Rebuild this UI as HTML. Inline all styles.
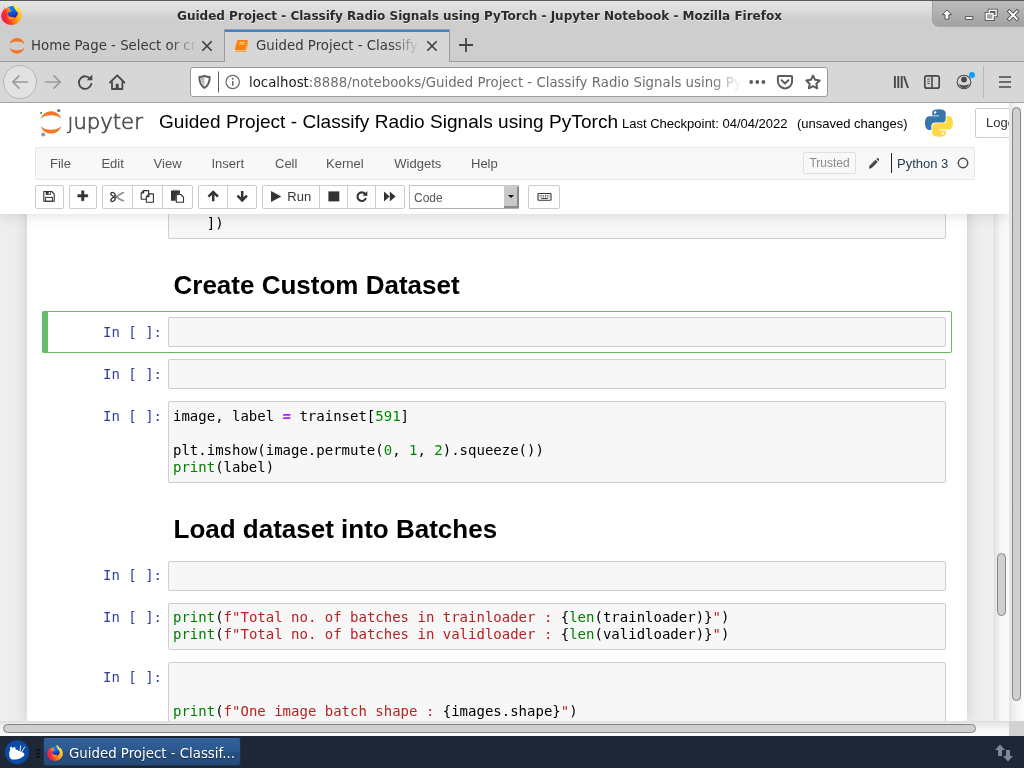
<!DOCTYPE html>
<html lang="en">
<head>
<meta charset="utf-8">
<title>Guided Project - Classify Radio Signals using PyTorch - Jupyter Notebook</title>
<style>
*{box-sizing:border-box;margin:0;padding:0}
html,body{width:1024px;height:768px;overflow:hidden;background:#d7d7d7}
body{position:relative;font-family:"DejaVu Sans","Liberation Sans",sans-serif;font-size:13px;color:#222}
#root{position:absolute;left:0;top:0;width:1024px;height:768px;will-change:transform}
.abs{position:absolute}
/* ---------- window title bar ---------- */
#titlebar{left:0;top:0;width:1024px;height:30px;background:linear-gradient(#e5e5e5 0px,#dfdfdf 7px,#d6d6d6 13px,#cecece 18px,#cecece 30px);border-top:1px solid #5a5a5a}
#titletext{left:0.500px;top:9px;text-shadow:0 1px 0 rgba(255,255,255,.6);width:958px;text-align:center;font-weight:bold;font-size:12px;color:#2b2b2b;white-space:nowrap}
#winbtns{left:932px;top:1px;width:92px;height:26px;background:linear-gradient(#bcbcbc,#a2a2a2);border-bottom-left-radius:7px;border-left:1px solid #a0a0a0;border-bottom:1px solid #a8a8a8}
/* ---------- tab bar ---------- */
#tabbar{left:0;top:30px;width:1024px;height:32px;background:#cecece;border-bottom:1px solid #9c9c9c}
.tabtxt{font-size:13.33px;color:#3a3a3a;white-space:nowrap;overflow:hidden}
#tab2{left:224px;top:29px;width:226px;height:33px;background:#d7d7d7;border-left:1px solid #9c9c9c;border-right:1px solid #9c9c9c;border-top:1px solid #9c9c9c}
#tab2:before{content:"";position:absolute;left:0;top:0;width:100%;height:2px;background:#2f86de}
/* ---------- nav bar ---------- */
#navbar{left:0;top:62px;width:1024px;height:41px;background:#d7d7d7;border-bottom:1px solid #a5a5a5}
#urlbar{left:190px;top:67px;width:638px;height:30px;background:#fff;border:1px solid #9a9a9a;border-radius:3px}
#urltext{left:249px;top:75px;font-size:13.33px;color:#6e6e6e;white-space:nowrap;width:492px;overflow:hidden}
#urltext b{font-weight:normal;color:#1a1a1a}
/* ---------- page ---------- */
#page{left:0;top:103px;width:1009px;height:618px;background:#eee;overflow:hidden;font-family:"Liberation Sans",sans-serif}
#header{left:0;top:0;width:1009px;height:111px;background:#fff;box-shadow:0 0 12px 1px rgba(87,87,87,.2);z-index:5}
#nbtitle{left:159px;top:6px;letter-spacing:0.04px;font-size:19.05px;color:#000;white-space:nowrap;line-height:25px}
#chk{left:622px;top:13px;font-size:13px;color:#000;white-space:nowrap;line-height:16px}
#chk2{left:797px;top:13px;font-size:13px;color:#000;white-space:nowrap;line-height:16px}
#logout{left:975px;top:5px;width:60px;height:30px;border:1px solid #ccc;border-radius:2px;font-size:13px;color:#333;line-height:28px;padding-left:10px;background:#fff}
#menubar{left:35px;top:44px;width:940px;height:33px;background:#f8f8f8;border:1px solid #e7e7e7;border-radius:2px}
.mi{position:absolute;top:8px;font-size:13px;color:#555;line-height:15px}
.tb{position:absolute;top:82px;height:24px;border:1px solid #ccc;border-radius:2px;background:#fff}
.tb i{position:absolute;top:0;width:1px;height:22px;background:#ccc}
#jtext{left:67.500px;top:4px;font-family:"DejaVu Sans",sans-serif;font-weight:200;-webkit-text-stroke:0.700px #4e4e4e;font-size:21.2px;line-height:30px;color:#4e4e4e;letter-spacing:0}
#sel{left:409px;top:82px;width:110px;height:23.500px;border:1px solid #c4c4c4;border-bottom-color:#b0b0b0;background:#fff;font-size:12px;color:#555;line-height:22px}
#sel span{position:absolute;left:4px;top:0.500px}
#sel b{position:absolute;right:-1px;top:-0.500px;width:15px;height:22.500px;background:#c9c9c9;border-right:2px solid #8c8c8c;border-bottom:2px solid #8c8c8c;border-top:1px solid #d4d4d4}
#sel b:after{content:"";position:absolute;left:4.400px;top:8.200px;border:3.400px solid transparent;border-top:3.800px solid #111;border-bottom:0}
#nb{left:27px;top:0;width:940px;height:618px;background:#fff;box-shadow:0 0 12px 1px rgba(87,87,87,.2)}
.inp{position:absolute;left:141px;width:778px;background:#f7f7f7;border:1px solid #cfcfcf;border-radius:2px}
.pr{position:absolute;left:21px;width:120px;text-align:right;padding-right:6px;font-family:"DejaVu Sans Mono","Liberation Mono",monospace;font-size:14px;line-height:17px;color:#303f9f;white-space:pre}
pre{position:absolute;left:146px;font-family:"DejaVu Sans Mono","Liberation Mono",monospace;font-size:14px;line-height:17px;color:#000;white-space:pre}
.k{color:#008000}.n{color:#080}.s{color:#ba2121}.o{color:#a2f;font-weight:bold}
h1{position:absolute;left:146.500px;font-size:26px;line-height:26px;font-weight:bold;color:#000;white-space:nowrap}
/* ---------- scrollbars ---------- */
.thumb{position:absolute;background:#cfcfcf;border:1px solid #858585;border-radius:5px}
/* ---------- taskbar ---------- */
#taskbar{left:0;top:736px;width:1024px;height:32px;background:#1e2736}
</style>
</head>
<body>
<div id="root">

<!-- TITLE BAR -->
<div id="titlebar" class="abs"></div>
<div id="titletext" class="abs">Guided Project - Classify Radio Signals using PyTorch - Jupyter Notebook - Mozilla Firefox</div>
<div id="winbtns" class="abs"></div>
<!-- firefox logo -->
<svg class="abs" style="left:1px;top:4px" width="21" height="21" viewBox="0 0 21 21">
  <defs>
    <linearGradient id="ffg" x1="0" y1="0.7" x2="1" y2="0.25"><stop offset="0" stop-color="#e0146a"/><stop offset="0.22" stop-color="#ff2d2d"/><stop offset="0.5" stop-color="#ff7a18"/><stop offset="0.78" stop-color="#ffc21e"/><stop offset="1" stop-color="#ffe84a"/></linearGradient>
    <linearGradient id="ffb" x1="0.3" y1="0" x2="0.6" y2="1"><stop offset="0" stop-color="#0a8dff"/><stop offset="0.5" stop-color="#0b5fe6"/><stop offset="1" stop-color="#2a148f"/></linearGradient>
    <linearGradient id="ffy" x1="0.3" y1="0" x2="0.7" y2="1"><stop offset="0" stop-color="#fff44f"/><stop offset="0.6" stop-color="#ffd52a"/><stop offset="1" stop-color="#ffa81a"/></linearGradient>
  </defs>
  <path d="M2.400 2.300c.5 1 .9 1.600 1.600 2.200C2.300 6 .2 8.500.2 11.600.2 16.800 4.700 21 10.300 21s10.200-4.200 10.200-9.400c0-3.300-1.300-6-3.200-8-.2.600-.3.900-.6 1.300C15.900 3 14.300 1 12.500 0c.3 1.300.2 2.300-.2 3.200-.6-.2-1.300-.3-2-.3-2.400 0-4.600.9-6.200 2.300-.8-.8-1.400-1.700-1.700-2.900z" fill="url(#ffg)"/>
  <circle cx="10.800" cy="8.300" r="6.200" fill="url(#ffb)"/>
  <path d="M12.500 0c1.800 1 3.400 3 4.200 4.900.3-.4.400-.7.600-1.300 1.900 2 3.200 4.700 3.200 8 0 1.400-.3 2.700-.9 3.900.2-3-1.200-5.300-3.100-7.400-1.700-1.900-3.700-3.800-4-8.100z" fill="url(#ffy)"/>
  <path d="M2.400 2.300c.3 1.200.9 2.100 1.700 2.900.9-.8 2-1.400 3.200-1.800.5.600 1.100 1 1.900 1.200-.5.300-.8.700-.8 1.200.7.500 1.600.8 2.500.8-.9.900-2.200 1.300-3.500 1.300-.6.800-.7 1.700-.4 2.600.5 1.300 1.700 2.200 3.200 2.400 1.200.2 2.200 0 2.900-.5-.3 1.300-1.800 2.600-4.100 2.600-3.200 0-5.800-2.500-5.800-5.900 0-1.300.3-2.300.8-3.200-.8-.9-1.400-2.100-1.600-3.600z" fill="url(#ffg)"/>
  <path d="M6.200 12.600c1.200.9 2.800 1.100 4.400.7 1-.3 1.800-.3 2.400.2-1.100 1.400-2.800 2-4.600 1.600-1-.3-1.800-1.200-2.200-2.500z" fill="#ff9a1c"/>
</svg>
<!-- window buttons -->
<svg class="abs" style="left:933px;top:1px" width="91" height="26" viewBox="0 0 91 26">
  <g fill="#fff" stroke="#444" stroke-width="0.900" stroke-linejoin="round">
    <path d="M13.900 9l4.500 4.700h-2.600v4.500h-3.800v-4.500H9.400z"/>
    <rect x="32.300" y="15.600" width="7.600" height="2.800"/>
  </g>
  <g fill="none" stroke="#444" stroke-width="3"><rect x="56.300" y="9.300" width="6.800" height="5.400"/><rect x="53.300" y="12.600" width="6.800" height="5.800"/></g>
  <g fill="none" stroke="#fff" stroke-width="1.400"><rect x="56.300" y="9.300" width="6.800" height="5.400"/><rect x="53.300" y="12.600" width="6.800" height="5.800" fill="#a6a6a6"/></g>
  <path d="M76.300 10.400l7.600 7.600m0-7.600l-7.600 7.600" stroke="#444" stroke-width="3.600" stroke-linecap="square"/>
  <path d="M76.300 10.400l7.600 7.600m0-7.600l-7.600 7.600" stroke="#fff" stroke-width="2" stroke-linecap="square"/>
</svg>

<!-- TAB BAR -->
<div id="tabbar" class="abs"></div>
<!-- tab1 favicon -->
<svg class="abs" style="left:9px;top:38px" width="16" height="16" viewBox="0 0 16 16">
  <path d="M.5 6C1.700 2.400 4.600.1 8 .1s6.300 2.300 7.500 5.900C13.700 4.300 11 3.500 8 3.500S2.300 4.300.5 6z" fill="#f37726"/>
  <path d="M.5 9.800C1.700 13.400 4.600 15.700 8 15.700s6.300-2.300 7.500-5.900C13.700 11.500 11 12.300 8 12.300S2.300 11.500.5 9.800z" fill="#f37726"/>
</svg>
<div class="abs tabtxt" style="left:31px;top:38px;width:167px;-webkit-mask-image:linear-gradient(90deg,#000 140px,transparent 166px);mask-image:linear-gradient(90deg,#000 140px,transparent 166px)">Home Page - Select or cr</div>
<svg class="abs" style="left:201px;top:40px" width="12" height="12" viewBox="0 0 12 12"><path d="M1.300 1.300l9.400 9.400m0-9.400l-9.400 9.400" stroke="#3c3c3c" stroke-width="1.600" fill="none"/></svg>
<div id="tab2" class="abs"></div>
<!-- tab2 favicon: orange book -->
<svg class="abs" style="left:234px;top:39px" width="15" height="14" viewBox="0 0 15 14">
  <path d="M4.200 1h8.600c.7 0 1.100.5.900 1.200L11.400 10.300c-.1.500-.6.900-1.100.9H2.300C1.400 11.200.8 10.400 1.100 9.500L3.100 1.900C3.200 1.400 3.700 1 4.200 1z" fill="#ff7f00"/>
  <path d="M14 3.200l-2.200 8c-.2.700-.8 1.200-1.500 1.200H2.300c-.6 0-1.100-.3-1.300-.8.100.9.800 1.500 1.700 1.500h8c.7 0 1.300-.5 1.500-1.200L14.300 4c.1-.3-.1-.6-.3-.8z" fill="#ff7f00"/>
  <path d="M5.600 3.300h5.300M5.200 5.100h5.300" stroke="#ffd9b0" stroke-width="1" fill="none"/>
</svg>
<div class="abs tabtxt" style="left:256px;top:38px;width:163px;-webkit-mask-image:linear-gradient(90deg,#000 135px,transparent 163px);mask-image:linear-gradient(90deg,#000 135px,transparent 163px)">Guided Project - Classify</div>
<svg class="abs" style="left:426px;top:40px" width="12" height="12" viewBox="0 0 12 12"><path d="M1.300 1.300l9.400 9.400m0-9.400l-9.400 9.400" stroke="#3c3c3c" stroke-width="1.600" fill="none"/></svg>
<svg class="abs" style="left:458px;top:37px" width="16" height="16" viewBox="0 0 16 16"><path d="M8 1v14M1 8h14" stroke="#444" stroke-width="1.800" fill="none"/></svg>

<!-- NAV BAR -->
<div id="navbar" class="abs"></div>
<!-- back / fwd / reload / home -->
<svg class="abs" style="left:0;top:62px" width="140" height="40" viewBox="0 0 140 40">
  <circle cx="20" cy="20" r="16.500" fill="#e2e2e2" stroke="#b4b4b4" stroke-width="1"/>
  <path d="M27.500 20H13m6-6.200L12.800 20l6.200 6.200" stroke="#9b9b9b" stroke-width="1.700" fill="none" stroke-linecap="round" stroke-linejoin="round"/>
  <path d="M45.500 20H60m-6-6.200L60.200 20 54 26.200" stroke="#9b9b9b" stroke-width="1.700" fill="none" stroke-linecap="round" stroke-linejoin="round"/>
  <path d="M90.500 17.200A6.300 6.300 0 1 0 91.300 22" stroke="#484848" stroke-width="1.800" fill="none" stroke-linecap="round"/>
  <path d="M92.300 12.600v5.600h-5.600z" fill="#484848"/>
  <path d="M110 20.500L117.200 13.300l7.200 7.200" stroke="#484848" stroke-width="1.800" fill="none" stroke-linecap="round" stroke-linejoin="round"/>
  <path d="M112 19.500v7.500h10.400v-7.500" stroke="#484848" stroke-width="1.800" fill="none" stroke-linejoin="round"/>
  <rect x="115.700" y="21.800" width="3" height="4.400" fill="#484848"/>
</svg>
<div id="urlbar" class="abs"></div>
<svg class="abs" style="left:190px;top:67px" width="60" height="30" viewBox="0 0 60 30">
  <path d="M9.300 10c1.900 0 3.600-.4 5.200-1.200 1.600.8 3.300 1.200 5.200 1.200 0 5-1.400 8.600-5.200 11C10.700 18.600 9.300 15 9.300 10z" fill="none" stroke="#5a5a5a" stroke-width="1.900" stroke-linejoin="round"/>
  <path d="M14.500 10.500v8.500c-2.300-1.800-3.300-4.500-3.500-8 1.300-.1 2.400-.3 3.500-.5z" fill="#8a8a8a" opacity=".6"/>
  <path d="M28.500 4.500v21" stroke="#5a5a5a" stroke-width="1"/>
  <circle cx="42.700" cy="15" r="6.700" fill="none" stroke="#6a6a6a" stroke-width="1.200"/>
  <rect x="42" y="14" width="1.500" height="4.800" fill="#6a6a6a"/><circle cx="42.750" cy="11.700" r="1" fill="#6a6a6a"/>
</svg>
<div id="urltext" class="abs" style="-webkit-mask-image:linear-gradient(90deg,#000 462px,transparent 492px);mask-image:linear-gradient(90deg,#000 462px,transparent 492px)"><b>localhost</b>:8888/notebooks/Guided Project - Classify Radio Signals using Py</div>
<svg class="abs" style="left:745px;top:67px" width="82" height="30" viewBox="0 0 82 30">
  <circle cx="6.200" cy="15" r="1.900" fill="#5c5c5c"/><circle cx="12.300" cy="15" r="1.900" fill="#5c5c5c"/><circle cx="18.400" cy="15" r="1.900" fill="#5c5c5c"/>
  <path d="M33.800 9h12.400c.5 0 .9.400.9.900v4.400a7.100 7.100 0 0 1-14.200 0V9.900c0-.5.400-.9.900-.9z" fill="none" stroke="#5c5c5c" stroke-width="2"/>
  <path d="M36.600 13.200l3.400 3.300 3.400-3.300" fill="none" stroke="#5c5c5c" stroke-width="2" stroke-linecap="round" stroke-linejoin="round"/>
  <path d="M68 8.600l2.050 4.200 4.650.650-3.350 3.250.8 4.600L68 19.100l-4.150 2.200.8-4.600-3.350-3.250 4.650-.650z" fill="none" stroke="#5c5c5c" stroke-width="2" stroke-linejoin="round"/>
</svg>
<!-- right nav icons -->
<svg class="abs" style="left:888px;top:62px" width="136" height="40" viewBox="0 0 136 40">
  <g stroke="#484848" stroke-width="1.900" fill="none" stroke-linecap="butt">
    <path d="M6.900 13.900v12.200M10.300 13.900v12.200M13.700 13.900v12.200M16 14.300l4 11.700"/>
  </g>
  <rect x="36.800" y="13.800" width="14.400" height="12.400" rx="2" fill="none" stroke="#484848" stroke-width="1.700"/>
  <path d="M44 14v12" stroke="#484848" stroke-width="1.600"/>
  <path d="M39.300 17h2.500M39.300 19.300h2.500M39.300 21.600h2.500" stroke="#484848" stroke-width="1"/>
  <circle cx="76" cy="20" r="6.800" fill="none" stroke="#484848" stroke-width="1.100"/>
  <circle cx="76" cy="17.600" r="2.900" fill="#484848"/>
  <path d="M71 21.800c1.300 1.100 3.100 1.700 5 1.700s3.700-.6 5-1.700c-.5 2.500-2.500 4.200-5 4.200s-4.500-1.700-5-4.200z" fill="#484848"/>
  <circle cx="84" cy="13" r="3" fill="#0a9ffa"/>
  <path d="M95.500 3.500v33" stroke="#b9b9b9" stroke-width="1"/>
  <path d="M111 15h12M111 20h12M111 25h12" stroke="#484848" stroke-width="1.700" fill="none"/>
</svg>

<!-- PAGE -->
<div id="page" class="abs">
  <div id="nb" class="abs">
    <div class="abs" style="left:382px;top:111px;width:7px;height:1px;background:#444"></div>
    <!-- partial cell -->
    <div class="inp" style="top:97px;height:39px"></div>
    <pre style="top:112px">    ])</pre>
    <h1 style="top:169px">Create Custom Dataset</h1>
    <!-- selected cell -->
    <div class="abs" style="left:15px;top:208px;width:910px;height:42px;border:1px solid #66bb6a;border-radius:2px"></div>
    <div class="abs" style="left:15px;top:208px;width:6px;height:42px;background:#66bb6a;border-radius:2px 0 0 2px"></div>
    <div class="pr" style="top:221px">In [ ]:</div><div class="inp" style="top:214px;height:30px"></div>
    <div class="pr" style="top:263px">In [ ]:</div><div class="inp" style="top:256px;height:30px"></div>
    <div class="pr" style="top:305px">In [ ]:</div><div class="inp" style="top:298px;height:82px"></div>
<pre style="top:305px">image, label <span class="o">=</span> trainset[<span class="n">591</span>]

plt.imshow(image.permute(<span class="n">0</span>, <span class="n">1</span>, <span class="n">2</span>).squeeze())
<span class="k">print</span>(label)</pre>
    <h1 style="top:413px">Load dataset into Batches</h1>
    <div class="pr" style="top:464px">In [ ]:</div><div class="inp" style="top:458px;height:30px"></div>
    <div class="pr" style="top:506px">In [ ]:</div><div class="inp" style="top:500px;height:47px"></div>
<pre style="top:506px"><span class="k">print</span>(<span class="s">f"Total no. of batches in trainloader : </span>{<span class="k">len</span>(trainloader)}<span class="s">"</span>)
<span class="k">print</span>(<span class="s">f"Total no. of batches in validloader : </span>{<span class="k">len</span>(validloader)}<span class="s">"</span>)</pre>
    <div class="pr" style="top:566px">In [ ]:</div><div class="inp" style="top:559px;height:80px"></div>
<pre style="top:566px">


<span class="k">print</span>(<span class="s">f"One image batch shape : </span>{images.shape}<span class="s">"</span>)</pre>
  </div>
  <div id="header" class="abs">
    <!-- jupyter logo -->
    <svg class="abs" style="left:38px;top:4px" width="28" height="32" viewBox="0 0 28 32">
      <path d="M2.500 11.800C4.200 7.200 8.400 4.200 13 4.200s8.800 3 10.500 7.600C20.800 9.300 17 8.200 13 8.200S5.200 9.300 2.500 11.800z" fill="#f37726"/>
      <path d="M2.500 19.200C4.200 23.700 8.400 26.600 13 26.600s8.800-2.900 10.500-7.400C20.800 21.600 17 22.700 13 22.700S5.200 21.600 2.500 19.200z" fill="#f37726"/>
      <circle cx="20.700" cy="3.600" r="1.700" fill="#767677"/>
      <circle cx="3.100" cy="6" r="1" fill="#616262"/>
      <circle cx="5.200" cy="27.600" r="2" fill="#989798"/>
    </svg>
    <div id="jtext" class="abs">jupyter</div><div class="abs" style="left:68px;top:7px;width:6px;height:5px;background:#fff"></div>
    <div id="nbtitle" class="abs">Guided Project - Classify Radio Signals using PyTorch</div>
    <div id="chk" class="abs">Last Checkpoint: 04/04/2022</div><div id="chk2" class="abs">(unsaved changes)</div>
    <!-- python logo -->
    <svg class="abs" style="left:925px;top:6px" width="28" height="28" viewBox="0 0 111 110">
      <defs>
        <linearGradient id="pyb" x1="0" y1="0" x2="1" y2="1"><stop offset="0" stop-color="#5a9fd4"/><stop offset="1" stop-color="#306998"/></linearGradient>
        <linearGradient id="pyy" x1="0" y1="0" x2="1" y2="1"><stop offset="0" stop-color="#ffe873"/><stop offset="1" stop-color="#ffd43b"/></linearGradient>
      </defs>
      <path fill="#3776ab" d="M54.900 0C26.900 0 28.600 12.200 28.600 12.200l.03 12.600h26.800v3.800H18S0 26.500 0 55s15.700 27.400 15.700 27.400h9.400V69.200s-.5-15.700 15.400-15.700h26.600s14.900.2 14.900-14.400V14.900S84.300 0 54.900 0zM40.100 8.500a4.800 4.800 0 1 1 0 9.600 4.800 4.800 0 0 1 0-9.600z"/>
      <path fill="#ffd845" d="M55.700 109.800c28 0 26.300-12.200 26.300-12.200l-.03-12.600H55.200v-3.800h37.400s18 2 18-26.400-15.700-27.400-15.700-27.400h-9.400v13.200s.5 15.700-15.400 15.700H43.500s-14.900-.2-14.900 14.400v24.200s-2.300 14.900 27.100 14.900zm14.800-8.500a4.800 4.800 0 1 1 0-9.600 4.800 4.800 0 0 1 0 9.600z"/>
    </svg>
    <div id="logout" class="abs">Logout</div>
    <div id="menubar" class="abs">
      <span class="mi" style="left:14px">File</span>
      <span class="mi" style="left:65.400px">Edit</span>
      <span class="mi" style="left:117.600px">View</span>
      <span class="mi" style="left:175.500px">Insert</span>
      <span class="mi" style="left:239px">Cell</span>
      <span class="mi" style="left:290px">Kernel</span>
      <span class="mi" style="left:358.300px">Widgets</span>
      <span class="mi" style="left:435px">Help</span>
      <div class="abs" style="left:767px;top:4px;width:53px;height:22px;border:1px solid #e0e0e0;border-radius:2px;font-size:12px;line-height:20px;color:#8a8a8a;text-align:center">Trusted</div>
      <!-- pencil -->
      <svg class="abs" style="left:831.500px;top:10px" width="11.500" height="11.500" viewBox="0 0 14 14"><path d="M1 13l.8-3.600 7.400-7.400 2.800 2.800-7.400 7.400zM10.100 1.100l.9-.9c.4-.4 1-.4 1.400 0l1.400 1.400c.4.400.4 1 0 1.400l-.9.900z" fill="#4a4a4a"/></svg>
      <div class="abs" style="left:855px;top:5px;width:1px;height:20px;background:#222"></div>
      <span class="mi" style="left:861px;color:#1d3a4a;font-size:13px">Python 3</span>
      <svg class="abs" style="left:920px;top:8px" width="14" height="14" viewBox="0 0 14 14"><circle cx="7" cy="7" r="4.700" fill="none" stroke="#4a4a4a" stroke-width="1.500"/></svg>
    </div>
    <!-- toolbar -->
    <div class="tb" style="left:35px;width:29px"></div>
    <div class="tb" style="left:69px;width:28px"></div>
    <div class="tb" style="left:102px;width:91px"><i style="left:29px"></i><i style="left:59px"></i></div>
    <div class="tb" style="left:198px;width:59px"><i style="left:28px"></i></div>
    <div class="tb" style="left:262px;width:143px"><i style="left:56px"></i><i style="left:84px"></i><i style="left:112px"></i><span class="abs" style="left:24.300px;top:3px;font-size:13px;line-height:15px;color:#333">Run</span></div>
    <div class="abs" id="sel"><span>Code</span><b></b></div>
    <div class="tb" style="left:528px;width:32px"></div>
    <!-- toolbar icons -->
    <svg class="abs" style="left:35px;top:81px" width="530" height="26" viewBox="0 0 530 26">
      <!-- save -->
      <path d="M8.800 7.500h8l2.400 2.400v7.400H8.800z" fill="none" stroke="#333" stroke-width="1.100" stroke-linejoin="round"/>
      <rect x="10.700" y="7.500" width="5.100" height="3.300" fill="#333"/><rect x="13.700" y="8.100" width="1.300" height="2" fill="#fff"/>
      <rect x="10.600" y="13.400" width="6.800" height="3.900" fill="none" stroke="#333" stroke-width="1"/>
      <!-- plus -->
      <path d="M46.450 6.750h2.600v3.750h3.750v2.600h-3.750v3.750h-2.600v-3.750h-3.750v-2.600h3.750z" fill="#333" stroke="#333" stroke-width=".4" stroke-linejoin="round"/>
      <!-- scissors -->
      <g stroke="#333" fill="none"><ellipse cx="78" cy="10.300" rx="2.400" ry="1.600" transform="rotate(35 78 10.300)" stroke-width="1.200"/><ellipse cx="78" cy="15.500" rx="2.400" ry="1.600" transform="rotate(-35 78 15.500)" stroke-width="1.200"/>
      <path d="M79.800 11.600l9 5.200-1.600.3-7.400-4.300M79.800 14.200l9-5.500-1.700-.2-7.300 4.500" stroke-width=".7" stroke="#555"/></g>
      <!-- copy -->
      <g stroke="#333" stroke-width="1.100" fill="#fff" stroke-linejoin="round"><path d="M108.600 6.600h5v8.600h-7.400V9z"/><path d="M108.600 6.600V9h-2.400" fill="none"/><path d="M114 9.900h4.400v8.400h-7.100v-5.700z"/><path d="M114 9.900v2.700h-2.700" fill="none"/></g>
      <!-- paste -->
      <path d="M136 6.400h9v3.400h-2.300l-1.900 2v4.900H136z" fill="#333"/><path d="M138 6.200h5" stroke="#888" stroke-width="1"/>
      <path d="M141.300 10.500h4.600l2.600 2.600v5.100h-7.200z" fill="#fff" stroke="#333" stroke-width="1.100" stroke-linejoin="round"/>
      <!-- arrows up/down -->
      <path d="M178.200 8.300v8.900M173.500 12.600l4.700-4.700 4.700 4.700" stroke="#333" stroke-width="2.500" fill="none" stroke-linejoin="miter"/>
      <path d="M207.200 7v8.900M202.500 11.700l4.700 4.700 4.700-4.700" stroke="#333" stroke-width="2.500" fill="none" stroke-linejoin="miter"/>
      <g fill="#333">
        <!-- play -->
        <path d="M236 7l10.300 5.450L236 17.900z"/>
        <!-- stop -->
        <rect x="293.400" y="7.400" width="10.900" height="10"/>
        <!-- fast forward -->
        <path d="M349 7.400l5.600 5.100-5.600 5.100zM354.800 7.400l5.800 5.100-5.800 5.100z"/>
      </g>
      <!-- repeat -->
      <path d="M330.100 9.900A4.300 4.300 0 1 0 330.900 14" stroke="#333" stroke-width="2.100" fill="none"/>
      <path d="M332.300 6.900v4.800h-4.800z" fill="#333"/>
      <!-- keyboard -->
      <rect x="503" y="9.500" width="13" height="6.800" rx=".8" fill="none" stroke="#333" stroke-width="1.100"/>
      <path d="M504.600 11.600h9.800M504.600 13h9.800" stroke="#333" stroke-width=".9" stroke-dasharray="1 .8"/><path d="M506.200 14.500h6.600" stroke="#333" stroke-width=".9"/>
    </svg>
  </div>
</div>

<!-- notebook right gutter + inner scrollbar -->
<div class="abs" style="left:994px;top:214px;width:15px;height:507px;background:linear-gradient(90deg,#e6e6e6,#f6f6f6 40%,#fafafa);border-left:1px solid #dcdcdc"></div>
<div class="thumb" style="left:997px;top:553px;width:9px;height:63px"></div>
<!-- outer vertical scrollbar -->
<div class="abs" style="left:1009px;top:103px;width:15px;height:618px;background:linear-gradient(90deg,#e3e3e3,#f4f4f4 45%,#fbfbfb)"></div>
<div class="thumb" style="left:1012px;top:107px;width:9px;height:594px"></div>
<!-- horizontal scrollbar -->
<div class="abs" style="left:0;top:721px;width:1009px;height:15px;background:linear-gradient(#e3e3e3,#f4f4f4 45%,#fbfbfb);border-top:1px solid #dedede"></div>
<div class="thumb" style="left:3px;top:724px;width:973px;height:9px"></div>
<div class="abs" style="left:1009px;top:721px;width:15px;height:15px;background:#d2d2d2"></div>
<!-- TASKBAR -->
<div id="taskbar" class="abs">
  <!-- xfce menu icon -->
  <svg class="abs" style="left:4px;top:3px" width="26" height="26" viewBox="0 0 26 26">
    <circle cx="13" cy="13.200" r="12" fill="#0b4aa6"/>
    <path d="M5.300 16.500c-.3-2.200.2-4.300 1-5.700-.5-1.300-.3-2.700.6-3 .8-.2 1.500.5 1.900 1.600.3-1 .9-1.600 1.600-1.500.9.200 1.300 1.400 1.300 2.700 1.200.2 2.400.7 3.500 1.300l1.300.5c2.200.6 3.800 1.500 3.900 2.900.1 1.500-1.400 2.700-3.600 3.600-2.600 1.100-6 2-8.600 1.500-1.800-.3-2.700-1.800-2.900-3.900z" fill="#fff"/>
    <path d="M16 12.300l.7-5.500M17.600 13l3.100-5.100" stroke="#fff" stroke-width="0.900" fill="none" stroke-linecap="round"/>
  </svg>
  <div class="abs" style="left:36px;top:13px;width:4px;height:2px;background:#10151d;box-shadow:0 3.500px 0 #10151d,0 7px 0 #10151d"></div>
  <div class="abs" style="left:43px;top:2px;width:198px;height:28px;background:linear-gradient(#31609a,#2b588d 49%,#274f80 51%,#254b7a);border:1px solid #1a3350;border-top-color:#3a699f;border-radius:3px"></div>
  <svg class="abs" style="left:47px;top:9px" width="16" height="16" viewBox="0 0 21 21">
    <path d="M2.400 2.300c.5 1 .9 1.600 1.600 2.200C2.300 6 .2 8.500.2 11.600.2 16.800 4.700 21 10.300 21s10.200-4.200 10.200-9.400c0-3.300-1.300-6-3.200-8-.2.600-.3.900-.6 1.300C15.900 3 14.300 1 12.500 0c.3 1.300.2 2.300-.2 3.200-.6-.2-1.300-.3-2-.3-2.400 0-4.600.9-6.200 2.300-.8-.8-1.400-1.700-1.700-2.900z" fill="url(#ffg)"/>
    <circle cx="10.800" cy="8.300" r="6.200" fill="url(#ffb)"/>
    <path d="M12.500 0c1.800 1 3.400 3 4.200 4.900.3-.4.400-.7.600-1.300 1.900 2 3.200 4.700 3.200 8 0 1.400-.3 2.700-.9 3.900.2-3-1.200-5.300-3.100-7.400-1.700-1.900-3.700-3.800-4-8.100z" fill="url(#ffy)"/>
    <path d="M2.400 2.300c.3 1.200.9 2.100 1.700 2.900.9-.8 2-1.400 3.200-1.800.5.600 1.100 1 1.900 1.200-.5.300-.8.700-.8 1.200.7.500 1.600.8 2.500.8-.9.900-2.200 1.300-3.500 1.300-.6.800-.7 1.700-.4 2.600.5 1.300 1.700 2.200 3.200 2.400 1.200.2 2.200 0 2.900-.5-.3 1.300-1.800 2.600-4.100 2.600-3.200 0-5.800-2.500-5.800-5.900 0-1.300.3-2.300.8-3.200-.8-.9-1.400-2.100-1.600-3.600z" fill="url(#ffg)"/>
    <path d="M6.200 12.600c1.200.9 2.800 1.100 4.400.7 1-.3 1.800-.3 2.400.2-1.100 1.400-2.800 2-4.600 1.600-1-.3-1.800-1.200-2.200-2.500z" fill="#ff9a1c"/>
  </svg>
  <div class="abs" style="left:69px;top:10px;font-size:13.330px;line-height:16px;color:#fff;white-space:nowrap;text-shadow:0 1px 1px rgba(0,0,0,.5)">Guided Project - Classif...</div>
  <svg class="abs" style="left:994px;top:7px" width="20" height="20" viewBox="0 0 20 20"><path d="M6 1.500l5 5.500H8v6H4V7H1zM14 18.500l-5-5.500h3V7h4v6h3z" fill="#7d8797"/></svg>
</div>
</div>
</body>
</html>
